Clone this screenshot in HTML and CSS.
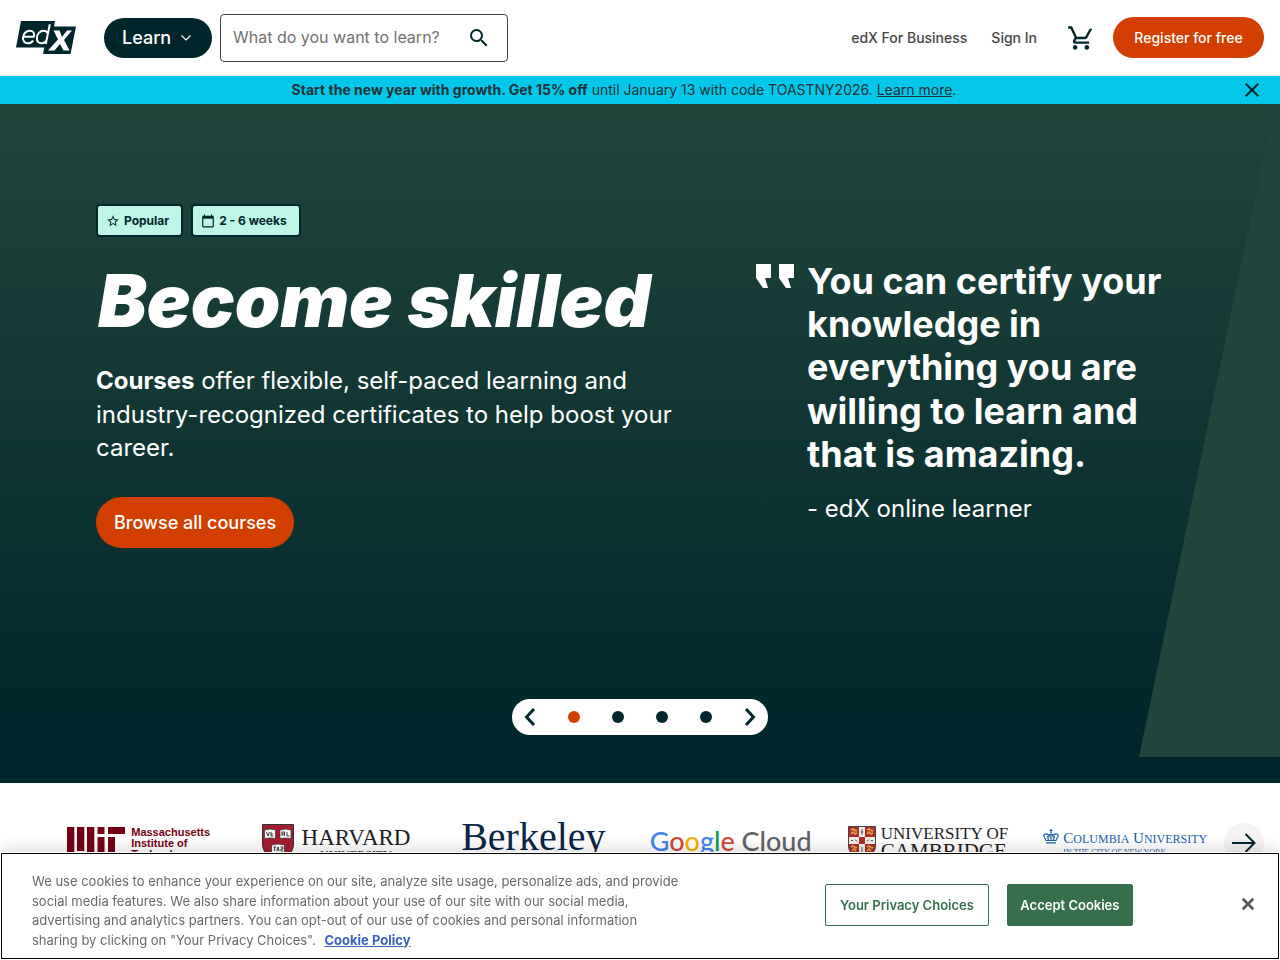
FILE: index.html
```html
<!DOCTYPE html>
<html lang="en">
<head>
<meta charset="utf-8">
<meta name="viewport" content="width=device-width, initial-scale=1">
<title>edX</title>
<link rel="stylesheet" href="styles.css">
</head>
<body>
<header class="header">
  <a class="brand" href="#" aria-label="edX home">
    <svg width="60" height="34" viewBox="0 0 60 34">
      <path fill="#00262b" d="M5 0H39L38 5.500H60L54.500 33H27L28.300 26.500H0Z"/>
      <g fill="none" stroke="#fff" stroke-width="2">
        <path d="M7.300 15.800H17.800C19 11.800 17 9.700 13.700 9.700C10 9.700 7.300 12.800 7 16.500C6.700 20 8.600 22.300 11.800 22.300C14.200 22.300 16 21.300 17.100 19.400"/>
        <path d="M33.800 3.200L29.800 23M32 13.500C31.500 11 29.800 9.700 27.500 9.700C23.800 9.700 21 13 20.900 17C20.800 20.300 22.500 22.300 25.300 22.300C28 22.300 30.300 20.500 31 17.500"/>
      </g>
      <path fill="#fff" d="M37.500 9.500H43.500L46 16L51 9.500H56L48 19L53.500 29.500H47.500L44 23L38.500 29.500H32L42 18.500Z"/>
    </svg>
  </a>
  <button class="learn" type="button">Learn
    <svg width="12" height="8" viewBox="0 0 12 8"><path d="M1.500 1.500L6 6L10.500 1.500" fill="none" stroke="#fff" stroke-width="1.200"/></svg>
  </button>
  <form class="search" role="search">
    <input class="search-input" type="text" placeholder="What do you want to learn?" aria-label="Search">
    <button class="icon-button" type="submit" aria-label="Submit search">
      <svg width="24" height="24" viewBox="0 0 24 24" fill="#00262b"><path d="M15.500 14h-.79l-.28-.27A6.471 6.471 0 0 0 16 9.500 6.500 6.500 0 1 0 9.500 16c1.610 0 3.090-.59 4.230-1.570l.27.28v.79l5 4.990L20.490 19l-4.990-5zm-6 0C7.010 14 5 11.990 5 9.500S7.010 5 9.500 5 14 7.010 14 9.500 11.990 14 9.500 14z"/></svg>
    </button>
  </form>
  <nav class="nav" aria-label="Account">
    <a class="nav-link" href="#">edX For Business</a>
    <a class="nav-link" href="#">Sign In</a>
    <a class="cart" href="#" aria-label="Cart">
      <svg width="28" height="28" viewBox="0 0 24 24" fill="#00262b"><path d="M15.550 13c.75 0 1.410-.41 1.750-1.030L21.700 4H19.430L15.550 11H8.530L4.270 2H1v2h2l3.600 7.590-1.350 2.440C4.520 15.370 5.480 17 7 17h12v-2H7l1.100-2h7.450zM7 18c-1.100 0-1.990.9-1.990 2S5.900 22 7 22s2-.9 2-2-.9-2-2-2zm10 0c-1.100 0-1.990.9-1.990 2s.89 2 1.990 2 2-.9 2-2-.9-2-2-2z"/></svg>
    </a>
    <a class="register" href="#">Register for free</a>
  </nav>
</header>

<aside class="promo">
  <p class="promo-text"><strong>Start the new year with growth. Get 15% off</strong> until January 13 with code TOASTNY2026. <a class="promo-link" href="#">Learn more</a>.</p>
  <button class="icon-button" type="button" aria-label="Close promotion">
    <svg width="24" height="24" viewBox="0 0 24 24"><path d="M5.700 5.700L18.300 18.300M18.300 5.700L5.700 18.300" stroke="#00262b" stroke-width="2"/></svg>
  </button>
</aside>

<main>
  <section class="hero">
    <div class="hero-shape"></div>
    <div class="hero-content">
      <div class="pitch">
        <ul class="tags">
          <li class="tag"><svg width="14" height="14" viewBox="0 0 24 24" fill="#00262b"><path d="M22 9.240l-7.190-.62L12 2 9.190 8.630 2 9.240l5.460 4.730L5.820 21 12 17.270 18.180 21l-1.630-7.030L22 9.240zM12 15.400l-3.760 2.270 1-4.280-3.320-2.880 4.380-.38L12 6.100l1.710 4.040 4.380.38-3.320 2.880 1 4.280L12 15.400z"/></svg>Popular</li>
          <li class="tag"><svg width="14" height="14" viewBox="0 0 24 24" fill="#00262b"><path d="M20 3h-1V1h-2v2H7V1H5v2H4c-1.100 0-2 .9-2 2v16c0 1.100.9 2 2 2h16c1.100 0 2-.9 2-2V5c0-1.100-.9-2-2-2zm0 18H4V8h16v13z"/></svg>2 - 6 weeks</li>
        </ul>
        <h1 class="title">Become skilled</h1>
        <p class="lead"><strong>Courses</strong> offer flexible, self-paced learning and industry-recognized certificates to help boost your career.</p>
        <a class="browse" href="#">Browse all courses</a>
      </div>
      <figure class="quote">
        <svg class="quote-mark" width="38" height="24" viewBox="0 0 38 24" fill="#fff"><path d="M0 0H15V14H9L12 24H7L0 14ZM23 0H38V14H32L35 24H30L23 14Z"/></svg>
        <div class="quote-body">
          <blockquote class="quote-text">You can certify your knowledge in everything you are willing to learn and that is amazing.</blockquote>
          <figcaption class="quote-author">- edX online learner</figcaption>
        </div>
      </figure>
    </div>
    <div class="pager">
      <button class="pager-arrow" type="button" aria-label="Previous slide"><svg width="12" height="20" viewBox="0 0 12 20"><path d="M10 2L2.500 10L10 18" fill="none" stroke="#00262b" stroke-width="3"/></svg></button>
      <button class="dot dot-active" type="button" aria-label="Slide 1"></button>
      <button class="dot" type="button" aria-label="Slide 2"></button>
      <button class="dot" type="button" aria-label="Slide 3"></button>
      <button class="dot" type="button" aria-label="Slide 4"></button>
      <button class="pager-arrow" type="button" aria-label="Next slide"><svg width="12" height="20" viewBox="0 0 12 20"><path d="M2 2L9.500 10L2 18" fill="none" stroke="#00262b" stroke-width="3"/></svg></button>
    </div>
  </section>

  <section class="partners" aria-label="Partners">
    <ul class="partner-list">
      <li class="partner mit">
        <svg width="59" height="32" viewBox="0 0 59 32" fill="#750014"><path d="M0 0H7.300V32H0ZM10 0H17.300V24H10ZM20 0H27.300V32H20ZM30.500 0H37.500V7H30.500ZM30.500 10H37.500V32H30.500ZM41 0H58V7H41ZM41 10H48V32H41Z"/></svg>
        <span>Massachusetts<br>Institute of<br>Technology</span>
      </li>
      <li class="partner harvard">
        <svg width="32" height="38" viewBox="0 0 32 38">
          <path d="M.5.5H31.500V20C31.500 29 24 34 16 37.500C8 34 .5 29 .5 20Z" fill="#a51c30" stroke="#333"/>
          <g fill="#fff" stroke="#333" stroke-width=".7"><path d="M2.500 6L8 5L13.500 6V14.500L8 14L2.500 14.500ZM18 6L23.500 5L29 6V14.500L23.500 14L18 14.500ZM9.500 21L16 20L22.500 21V30L16 29L9.500 30Z"/></g>
          <path d="M4.500 8L6 12L7.500 8M9 8V12H11.500M9 10H11M20 12V8H22.500V12M20 10H22.500M25 8V12H27.500M11.500 23H14M12.700 23V27M15 27L16 23L17 27M18.500 23H21V25H19V27H21" fill="none" stroke="#222" stroke-width=".9"/>
        </svg>
        <span class="harvard-text"><span>HARVARD</span><small>UNIVERSITY</small></span>
      </li>
      <li class="partner berkeley">Berkeley</li>
      <li class="partner google"><span><span class="g-blue">G</span><span class="g-red">o</span><span class="g-yellow">o</span><span class="g-blue">g</span><span class="g-green">l</span><span class="g-red">e</span> Cloud</span></li>
      <li class="partner cambridge">
        <svg width="28" height="34" viewBox="0 0 28 34">
          <path d="M.5.5H27.500V20C27.500 27 21 31 14 33.500C7 31 .5 27 .5 20Z" fill="#b02a30" stroke="#444"/>
          <path d="M11 1H17V32L14 33L11 32ZM1 11H27V18H1Z" fill="#f5efe8"/>
          <path d="M11 11H17V18H11Z" fill="#a8322f"/>
          <path d="M3 4L5 3L8 5L9 4M3 8L5 6L7 8L9 7M19 4L21 3L24 5L25 4M19 8L21 6L23 8L25 7M3 21L5 20L8 22L9 21M4 25L6 23L8 25M19 21L21 20L24 22L25 21M19 25L21 23L23 25" fill="none" stroke="#e0a836" stroke-width="1.600"/>
          <path d="M14 3V9M12.500 6H15.500M3 14.500H5M7 13.500L9 15.500M19 15.500L21 13.500M23 14.500H25M14 21V29" fill="none" stroke="#555"/>
        </svg>
        <span class="cambridge-text"><span>UNIVERSITY OF</span><span class="cambridge-name">CAMBRIDGE</span></span>
      </li>
      <li class="partner columbia">
        <svg width="16" height="15" viewBox="0 0 16 15" fill="none" stroke="#1c5fa8" stroke-width="1.200"><path d="M8 0V4M6.500 1.500H9.500M3 13.800H13M3 11.500H13L15.300 6.500C14.500 4.500 11.500 4 10 7C9.800 4.500 6.200 4.500 6 7C4.500 4 1.500 4.500.7 6.500ZM8 5V11M4.500 7L5.500 11M11.500 7L10.500 11"/></svg>
        <span class="columbia-text"><span class="columbia-name">C<small>OLUMBIA</small> U<small>NIVERSITY</small></span><span class="columbia-city">IN THE CITY OF NEW YORK</span></span>
      </li>
    </ul>
    <button class="next" type="button" aria-label="More partners"><svg width="24" height="20" viewBox="0 0 24 20"><path d="M0 10H22M13.500 1L22.500 10L13.500 19" fill="none" stroke="#00262b" stroke-width="2"/></svg></button>
  </section>
</main>

<div class="cookies" role="dialog" aria-label="Cookie notice">
  <p class="cookie-text">We use cookies to enhance your experience on our site, analyze site usage, personalize ads, and provide social media features. We also share information about your use of our site with our social media, advertising and analytics partners. You can opt-out of our use of cookies and personal information sharing by clicking on "Your Privacy Choices". <a class="cookie-link" href="#">Cookie Policy</a></p>
  <div class="cookie-actions">
    <button class="cookie-button" type="button">Your Privacy Choices</button>
    <button class="cookie-button cookie-accept" type="button">Accept Cookies</button>
  </div>
  <button class="icon-button cookie-close" type="button" aria-label="Close cookie notice"><svg width="12" height="12" viewBox="0 0 12 12"><path d="M1.500 1.500L10.500 10.500M10.500 1.500L1.500 10.500" stroke="#565656" stroke-width="2.600" stroke-linecap="round"/></svg></button>
</div>
</body>
</html>
```
FILE: styles.css
```css
* { box-sizing: border-box; }
body {
  margin: 0;
  font-family: Inter, "Liberation Sans", sans-serif;
  color: #00262b;
  background: #fff;
}
button, input { font: inherit; color: inherit; }
button { border: 0; padding: 0; background: none; cursor: pointer; }
a { color: inherit; text-decoration: none; }
ul, p, h1, figure, blockquote { margin: 0; padding: 0; }
ul { list-style: none; }
svg { display: block; flex: none; }
.icon-button { display: flex; flex: none; }

.header {
  display: flex;
  align-items: center;
  height: 76px;
  padding: 0 16px;
  border-bottom: 1px solid #e8edee;
}
.brand { margin-right: 28px; }
.learn {
  display: flex;
  align-items: center;
  gap: 9px;
  width: 108px;
  height: 40px;
  margin-right: 8px;
  padding: 0 18px;
  border-radius: 20px;
  background: #00262b;
  color: #fff;
  font-size: 18px;
  font-weight: 500;
}
.search {
  display: flex;
  align-items: center;
  justify-content: space-between;
  width: 288px;
  height: 48px;
  padding: 0 16px 0 12px;
  border: 1px solid #454545;
  border-radius: 4px;
}
.search-input {
  width: 206px;
  border: 0;
  padding: 0 0 2px;
  outline: 0;
  background: none;
  font-size: 16px;
  line-height: 24px;
}
.search-input::placeholder { color: #707070; opacity: 1; }
.nav {
  display: flex;
  align-items: center;
  gap: 24px;
  margin-left: auto;
  font-size: 14px;
  font-weight: 500;
}
.nav-link { color: #454545; }
.cart { margin: 0 -6px 0 6px; }
.register {
  min-width: 151px;
  padding: 10px 18px;
  border-radius: 21px;
  background: #d23f00;
  color: #fff;
  line-height: 21px;
  text-align: center;
}

.promo {
  display: flex;
  align-items: center;
  height: 28px;
  padding: 0 16px 0 8px;
  background: #03c7e8;
  color: #1f3338;
  font-size: 14px;
}
.promo-text { flex: 1; padding-bottom: 2px; text-align: center; }
.promo-link { text-decoration: underline; }

.hero {
  position: relative;
  display: flex;
  flex-direction: column;
  justify-content: space-between;
  min-height: 679px;
  padding: 100px 96px 48px;
  background: linear-gradient(#21463c, #00262b 94%);
  color: #fff;
}
.hero-shape {
  position: absolute;
  top: 0;
  right: 0;
  bottom: 26px;
  width: 141px;
  background: #21463d;
  clip-path: polygon(96% 0, 100% 0, 100% 100%, 0 100%);
}
.hero-content {
  position: relative;
  display: grid;
  grid-template-columns: 600px 1fr;
  gap: 60px;
}
.tags { display: flex; gap: 8px; }
.tag {
  display: flex;
  align-items: center;
  gap: 4px;
  height: 33px;
  padding: 0 12px 0 8px;
  border: 2px solid #00262b;
  border-radius: 4px;
  background: #bdf5e6;
  color: #00262b;
  font-size: 12px;
  font-weight: 700;
}
.title {
  margin-top: 24px;
  padding-left: 2px;
  font-size: 73px;
  line-height: 79px;
  font-weight: 900;
  font-style: italic;
}
.lead {
  margin: 24px 0 32px;
  font-size: 24px;
  line-height: 1.4;
}
.browse {
  display: inline-block;
  padding: 12px 18px;
  border-radius: 26px;
  background: #d23f00;
  font-size: 18px;
  line-height: 27px;
  font-weight: 500;
}
.quote {
  display: flex;
  gap: 13px;
  padding-top: 56px;
}
.quote-mark { margin-top: 4px; }
.quote-text {
  font-size: 36px;
  line-height: 1.2;
  font-weight: 700;
}
.quote-author {
  margin-top: 16px;
  font-size: 24px;
  line-height: 34px;
}
.pager {
  position: relative;
  display: flex;
  align-items: center;
  align-self: center;
  justify-content: space-between;
  width: 256px;
  height: 36px;
  padding: 0 12px;
  border-radius: 18px;
  background: #fff;
}
.dot {
  width: 12px;
  height: 12px;
  border-radius: 50%;
  background: #00262b;
}
.dot-active { background: #d23f00; }

.partners {
  display: flex;
  align-items: center;
  padding: 32px 16px 57px 40px;
}
.partner-list {
  display: grid;
  flex: 1;
  grid-template-columns: repeat(6, 1fr);
  align-items: center;
}
.partner {
  display: flex;
  align-items: center;
  justify-content: center;
  height: 56px;
  white-space: nowrap;
}
.mit {
  gap: 5px;
  color: #750014;
  font: 700 11px/11px "Liberation Sans", sans-serif;
}
.harvard {
  gap: 8px;
  color: #1e1e1e;
  font: 23px/23px "Liberation Serif", serif;
}
.harvard-text { display: flex; flex-direction: column; align-items: center; }
.harvard small { font-size: 12px; line-height: 12px; }
.berkeley {
  padding-bottom: 12px;
  color: #0b2545;
  font: 40px/44px "Liberation Serif", serif;
}
.google {
  padding-bottom: 4px;
  color: #5f6368;
  font: 500 27px/36px Lato, sans-serif;
}
.g-blue { color: #4285f4; }
.g-red { color: #db4437; }
.g-yellow { color: #f4b400; }
.g-green { color: #0f9d58; }
.cambridge {
  gap: 5px;
  color: #1e1e1e;
  font: 17px/17px "Liberation Serif", serif;
}
.cambridge-text { display: flex; flex-direction: column; }
.cambridge-name { font-size: 21px; line-height: 19px; }
.columbia {
  gap: 4px;
  color: #1c5fa8;
  font: 15px/18px "Liberation Serif", serif;
}
.columbia svg { margin-bottom: 14px; }
.columbia-text { display: flex; flex-direction: column; }
.columbia-name small { font-size: 12px; }
.columbia-city { font-size: 8px; line-height: 10px; }
.next {
  display: flex;
  align-items: center;
  justify-content: center;
  width: 40px;
  height: 40px;
  border-radius: 50%;
  background: #f5f3f2;
}

.cookies {
  position: fixed;
  right: 0;
  bottom: 0;
  left: 0;
  display: flex;
  align-items: center;
  min-height: 108px;
  padding: 0 26px 0 32px;
  background: #fff;
  outline: 1px solid #000;
  outline-offset: -2px;
  box-shadow: 0 0 18px rgba(0, 0, 0, 0.2);
  font-size: 13px;
}
.cookie-text {
  width: 650px;
  padding: 20px 0 10px;
  color: #696969;
  line-height: 1.5;
}
.cookie-link {
  margin-left: 5px;
  color: #3860be;
  font-weight: 700;
  text-decoration: underline;
}
.cookie-actions { display: flex; gap: 18px; margin: 0 auto 2px 143px; }
.cookie-button {
  min-width: 126px;
  height: 42px;
  padding: 0 14px;
  border: 1px solid #356f4b;
  border-radius: 2px;
  color: #356f4b;
  font-weight: 600;
}
.cookie-accept { padding: 0 10px; background: #356f4b; color: #fff; }
.cookie-close { margin-bottom: 4px; }
```
